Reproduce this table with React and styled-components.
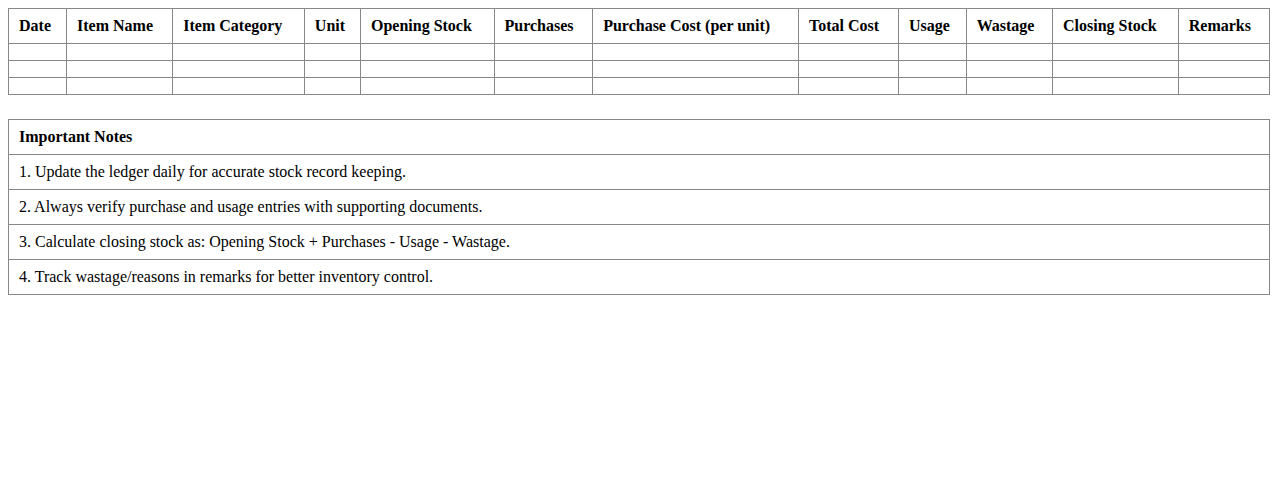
import React from "react";
import styled, { createGlobalStyle } from "styled-components";

const GlobalStyle = createGlobalStyle`
  body {
    margin: 8px;
    background: #fff;
    color: #000;
    font-family: "Liberation Serif", "Times New Roman", serif;
    font-size: 16px;
  }
`;

const columns = [
  "Date",
  "Item Name",
  "Item Category",
  "Unit",
  "Opening Stock",
  "Purchases",
  "Purchase Cost (per unit)",
  "Total Cost",
  "Usage",
  "Wastage",
  "Closing Stock",
  "Remarks",
];

const notes = [
  "1. Update the ledger daily for accurate stock record keeping.",
  "2. Always verify purchase and usage entries with supporting documents.",
  "3. Calculate closing stock as: Opening Stock + Purchases - Usage - Wastage.",
  "4. Track wastage/reasons in remarks for better inventory control.",
];

const Ledger = () => {
  return (
    <>
      <GlobalStyle />
      <Table>
        <thead>
          <tr>
            {columns.map((c) => (
              <HeadCell key={c}>{c}</HeadCell>
            ))}
          </tr>
        </thead>
        <tbody>
          {[0, 1, 2].map((r) => (
            <tr key={r}>
              {columns.map((c) => (
                <Cell key={c}></Cell>
              ))}
            </tr>
          ))}
        </tbody>
      </Table>

      <Notes>
        <thead>
          <tr>
            <HeadCell>Important Notes</HeadCell>
          </tr>
        </thead>
        <tbody>
          {notes.map((n) => (
            <tr key={n}>
              <Cell>{n}</Cell>
            </tr>
          ))}
        </tbody>
      </Notes>
    </>
  );
};

const Table = styled.table`
  width: 100%;
  border-collapse: collapse;
`;

const Notes = styled(Table)`
  margin-top: 24px;
`;

const HeadCell = styled.th`
  border: 1px solid #888;
  padding: 8px 10px;
  text-align: left;
  font-weight: 700;
  font-size: 16px;
`;

const Cell = styled.td`
  border: 1px solid #888;
  padding: 8px 10px;
  font-size: 16px;
`;

export default Ledger;
